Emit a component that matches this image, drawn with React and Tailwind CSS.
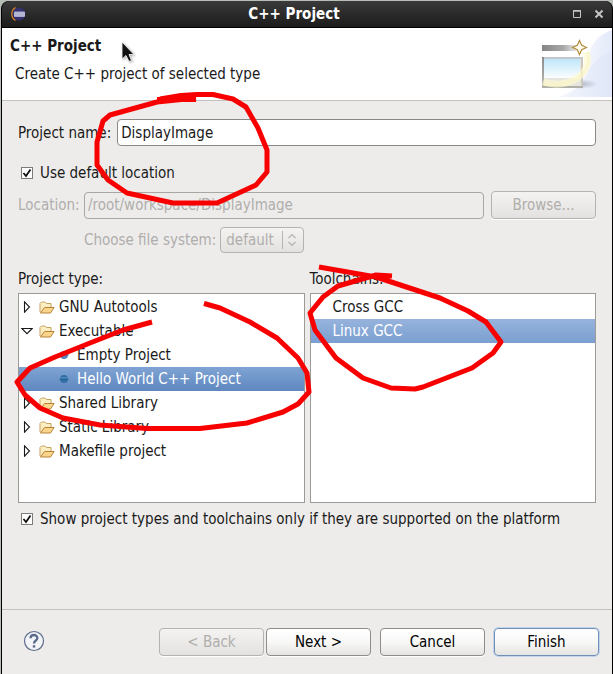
import React, { useState } from "react";

const projectTypes = [
  { name: "GNU Autotools", children: [] },
  { name: "Executable", children: ["Empty Project", "Hello World C++ Project"] },
  { name: "Shared Library", children: [] },
  { name: "Static Library", children: [] },
  { name: "Makefile project", children: [] },
];

const toolchains = ["Cross GCC", "Linux GCC"];

const EclipseIcon = () => (
  <svg width="16" height="16" viewBox="0 0 16 16" aria-hidden="true">
    <circle cx="9" cy="8" r="6.500" fill="#35306e" />
    <path d="M5.500 1.500C0.500 4.500 0.500 11.500 5.500 14.500" fill="none" stroke="#d9822b" strokeWidth="1.300" />
    <rect x="4" y="5.500" width="11" height="5.500" rx="1" fill="#a9a9cc" />
    <path d="M4 7h11M4 9h11" stroke="#c9c9e2" strokeWidth="0.700" />
  </svg>
);

const WizardBanner = () => (
  <svg width="75" height="70" viewBox="0 0 75 70" aria-hidden="true">
    <defs>
      <linearGradient id="sweep" x1="0" y1="0" x2="1" y2="0">
        <stop offset="0.3" stopColor="#ffffff" />
        <stop offset="1" stopColor="#e4eafa" />
      </linearGradient>
      <linearGradient id="bar" x1="0" y1="0" x2="1" y2="0">
        <stop offset="0" stopColor="#858585" />
        <stop offset="0.6" stopColor="#a9a9a9" />
        <stop offset="1" stopColor="#f4f4f4" />
      </linearGradient>
      <linearGradient id="side" x1="0" y1="0" x2="0" y2="1">
        <stop offset="0" stopColor="#8c8c8c" />
        <stop offset="1" stopColor="#b9b9b4" />
      </linearGradient>
      <linearGradient id="pane" x1="0" y1="0" x2="0" y2="1">
        <stop offset="0" stopColor="#bfe6fa" />
        <stop offset="1" stopColor="#fbfdff" />
      </linearGradient>
      <radialGradient id="shadow">
        <stop offset="0" stopColor="#8f93a8" stopOpacity="0.6" />
        <stop offset="1" stopColor="#8f93a8" stopOpacity="0" />
      </radialGradient>
    </defs>
    <path d="M75 2C62 6 53 16 50 32C46 54 30 64 6 69H75z" fill="url(#sweep)" />
    <path d="M75 24C62 27 54 36 50 46C44 60 34 66 20 69H75z" fill="#d5ddf4" opacity="0.3" />
    <ellipse cx="44" cy="56" rx="17" ry="5" fill="url(#shadow)" />
    <rect x="5" y="17" width="41" height="43" fill="#fff" />
    <rect x="5" y="17" width="36" height="6" fill="url(#bar)" />
    <rect x="5" y="29" width="41" height="31" fill="#e6e6df" />
    <rect x="5" y="29" width="41" height="2" fill="#c4c8ca" />
    <rect x="5" y="29" width="2" height="31" fill="url(#side)" />
    <rect x="44" y="31" width="2" height="29" fill="#c9c9c2" />
    <rect x="5" y="58" width="41" height="2" fill="#b0b0a8" />
    <rect x="7" y="31" width="36" height="19" fill="url(#pane)" />
    <path d="M49 24C57 44 34 62 6 54" fill="none" stroke="#fdf9d2" strokeWidth="7" opacity="0.7" />
    <path d="M50 24C57 44 34 61 7 56" fill="none" stroke="#f9f3b8" strokeWidth="3" strokeDasharray="2 1" opacity="0.5" />
    <path d="M42.500 12.500L44.700 17.300L49.500 19.500L44.700 21.700L42.500 26.500L40.300 21.700L35.500 19.500L40.300 17.300Z" fill="#fffdf2" stroke="#b48a3c" strokeWidth="1.200" />
  </svg>
);

const FolderIcon = () => (
  <svg width="16" height="16" viewBox="0 0 16 16" className="shrink-0" aria-hidden="true">
    <path d="M1 13V4.500L2.500 3H6L7.500 4.500H12V8.500" fill="#fdeec2" stroke="#c8a060" />
    <path d="M1.500 14L5.500 8.500H15.200L11.500 14Z" fill="#fbd68a" stroke="#b9823a" strokeLinejoin="round" />
  </svg>
);

const DotIcon = ({ selected }) => (
  <svg width="10" height="10" viewBox="0 0 10 10" className="shrink-0" aria-hidden="true">
    <circle cx="5" cy="5" r="4" fill={selected ? "#2f6fa6" : "#5b83bb"} />
    <path d="M0 4h10" stroke={selected ? "#6b9fcf" : "#86a8d6"} strokeWidth="1" />
    <path d="M0.500 5.200h9" stroke={selected ? "#245f92" : "#4a73ac"} strokeWidth="1" />
  </svg>
);

const Expander = ({ open }) => (
  <svg width="12" height="12" viewBox="0 0 12 12" className="shrink-0" aria-hidden="true">
    <path
      d={open ? "M0.800 3.500H11.200L6 8.700Z" : "M3.500 0.800V11.200L8.500 6Z"}
      fill="#fff"
      stroke="#1a1a1a"
      strokeWidth="1.100"
    />
  </svg>
);

const Checkbox = ({ label, checked, onChange }) => (
  <label className="flex items-center gap-[7px] pl-[3px] leading-5">
    <span className="grid h-3 w-3 shrink-0 place-items-center">
      <input
        type="checkbox"
        checked={checked}
        onChange={onChange}
        className="col-start-1 row-start-1 h-3 w-3 appearance-none border border-[#7d7b78] bg-white"
      />
      {checked && (
        <svg width="12" height="12" viewBox="0 0 12 12" className="pointer-events-none col-start-1 row-start-1">
          <path d="M2.500 6L5 9L9.500 2.500" fill="none" stroke="#111" strokeWidth="1.800" />
        </svg>
      )}
    </span>
    {label}
  </label>
);

const buttonBase = "h-7 w-[105px] rounded-[4px] border shadow-[0_1px_0_#ffffff] ";
const buttonStyles = {
  normal: "border-[#8f8d8a] bg-linear-to-b from-white via-[#f8f8f7] to-[#e6e4e2] text-black",
  disabled: "border-[#b5b3b0] bg-linear-to-b from-[#f4f3f2] to-[#e3e2e0] text-[#b0aeab]",
  primary:
    "border-[#6d8fb8] bg-linear-to-b from-white via-[#f8f8f7] to-[#e6e4e2] text-black outline outline-[#c3d4ea]",
};

const Button = ({ variant = "normal", children }) => (
  <button type="button" disabled={variant === "disabled"} className={buttonBase + buttonStyles[variant]}>
    {children}
  </button>
);

// Red marker strokes drawn over the dialog
const Markers = () => (
  <svg
    width="613"
    height="674"
    viewBox="0 0 613 674"
    className="pointer-events-none absolute top-0 left-0"
    fill="none"
    stroke="#f80000"
    strokeWidth="5"
    strokeLinejoin="round"
    aria-hidden="true"
  >
    <path d="M157 99.500H196" />
    <path d="M196 98L157 102L110 115L103 121L97 142V165L108 180L127 193L173 203H217L256 185L267 172V150L258 128L246 107L233 99L213 94.500H197L181 95.500L160 99" />
    <path d="M152 322L123 330L90 343L55 357L30 368L17 382L25 395L40 408L63 418L100 425L147 428.500H200L247 423L283 412L298 404L309 392L307 373L298 358L277 338L250 322L220 308L204 303.500" />
    <path d="M319 267L376 277L440 298L468 311L486 322L501 342L493 353L472 368L423 387L415 389L391 388L363 378L336 358L315 330L310 313L323 297L338 286L376 275L392 276" />
    <path
      d="M122 42V59L126 55.500L129 61.500L131.500 60.500L129 54.500H134Z"
      fill="#111"
      stroke="#fff"
      strokeWidth="0.800"
      className="drop-shadow-[1px_1px_1px_#00000055]"
    />
  </svg>
);

const App = () => {
  const [name, setName] = useState("DisplayImage");
  const [useDefault, setUseDefault] = useState(true);
  const [supportedOnly, setSupportedOnly] = useState(true);
  const [expanded, setExpanded] = useState("Executable");
  const [projectType, setProjectType] = useState("Hello World C++ Project");
  const [toolchain, setToolchain] = useState("Linux GCC");

  const rowSelected = "bg-linear-to-b from-[#96b3dc] to-[#7a9fd0] text-white";
  const treeSelected = "bg-linear-to-b from-[#7fa3d3] to-[#5f88c0] text-white";

  return (
    <div className="relative flex min-h-screen flex-col overflow-hidden bg-[#b9bdb7] pt-px pl-px font-['DejaVu_Sans_Condensed','DejaVu_Sans',sans-serif] text-[15px] leading-5 text-[#1a1a1a]">
      <div className="flex flex-1 flex-col rounded-t-lg border-x border-black bg-black">
        {/* Title bar */}
        <header className="flex h-[27px] items-center rounded-t-lg border-b border-black bg-linear-to-b from-[#3a3a3a] to-[#1c1c1c] px-2">
          <EclipseIcon />
          <div className="flex-1 text-center font-bold text-white">C++ Project</div>
          <div className="flex items-center gap-3 pl-[10px]">
            <button type="button" aria-label="Maximize">
              <svg width="10" height="10" viewBox="0 0 10 10" fill="none" stroke="#c4c4c4">
                <path d="M1.500 1.500h7v7h-7z" />
                <path d="M1 2h8" strokeWidth="1.500" />
              </svg>
            </button>
            <button type="button" aria-label="Close">
              <svg width="10" height="10" viewBox="0 0 10 10" fill="none" stroke="#c4c4c4" strokeWidth="2">
                <path d="M1.500 1.500l7 7M8.500 1.500l-7 7" />
              </svg>
            </button>
          </div>
        </header>

        {/* Wizard heading */}
        <section className="flex h-[73px] justify-between border-b border-[#c4c2bf] bg-white">
          <div className="pt-2 pl-2">
            <h1 className="font-bold">C++ Project</h1>
            <p className="pt-2 pl-[5px]">Create C++ project of selected type</p>
          </div>
          <WizardBanner />
        </section>

        <main className="flex flex-1 flex-col bg-[#edeceb] px-4 pt-[18px]">
          <div className="flex items-center gap-1.5">
            <label htmlFor="name">Project name:</label>
            <input
              id="name"
              value={name}
              onChange={(e) => setName(e.target.value)}
              className="h-[27px] min-w-0 flex-1 rounded-[4px] border border-[#8a8886] bg-white px-[3px] outline-none"
            />
          </div>

          <div className="pt-[17px]">
            <Checkbox
              label="Use default location"
              checked={useDefault}
              onChange={() => setUseDefault(!useDefault)}
            />
          </div>

          <div className="flex items-center pt-2 text-[#b0aeab]">
            <label htmlFor="location" className="w-[66px]">
              Location:
            </label>
            <input
              id="location"
              disabled
              defaultValue="/root/workspace/DisplayImage"
              className="mr-[7px] h-[27px] min-w-0 flex-1 rounded-[4px] border border-[#a9a7a4] px-[3px]"
            />
            <Button variant="disabled">Browse...</Button>
          </div>

          <div className="flex items-center gap-1 pt-2 pl-[66px] text-[#b0aeab]">
            <label htmlFor="fs">Choose file system:</label>
            <div className="grid items-center">
              <select
                id="fs"
                disabled
                className="col-start-1 row-start-1 h-[26px] w-[84px] appearance-none rounded-[4px] border border-[#b5b3b0] bg-linear-to-b from-[#f4f3f2] to-[#e3e2e0] pl-[5px]"
              >
                <option>default</option>
              </select>
              <svg
                width="22"
                height="20"
                viewBox="0 0 22 20"
                fill="none"
                stroke="#b5b3b0"
                className="pointer-events-none col-start-1 row-start-1 justify-self-end"
              >
                <path d="M0.500 1v18" />
                <path d="M6.500 8L10 4.500L13.500 8M6.500 12L10 15.500L13.500 12" strokeWidth="1.200" />
              </svg>
            </div>
          </div>

          <div className="grid grid-cols-2 gap-x-[5px] pt-4">
            <div id="types">Project type:</div>
            <div id="chains">Toolchains:</div>

            <ul aria-labelledby="types" className="mt-1 h-[210px] border border-[#9c9a97] bg-white pt-px">
              {projectTypes.map((type) => {
                const open = expanded === type.name;
                return (
                  <li key={type.name}>
                    <button
                      type="button"
                      onClick={() => setExpanded(open ? "" : type.name)}
                      className="flex h-6 w-full items-center pl-0.5"
                    >
                      <Expander open={open} />
                      <span className="pr-1 pl-1.5">
                        <FolderIcon />
                      </span>
                      {type.name}
                    </button>
                    {open &&
                      type.children.map((child) => (
                        <button
                          key={child}
                          type="button"
                          onClick={() => setProjectType(child)}
                          className={
                            "flex h-6 w-full items-center gap-2 pl-10 " +
                            (projectType === child ? treeSelected : "")
                          }
                        >
                          <DotIcon selected={projectType === child} />
                          {child}
                        </button>
                      ))}
                  </li>
                );
              })}
            </ul>

            <ul aria-labelledby="chains" className="mt-1 h-[210px] border border-[#9c9a97] bg-white pt-px">
              {toolchains.map((chain) => (
                <li key={chain}>
                  <button
                    type="button"
                    onClick={() => setToolchain(chain)}
                    className={
                      "flex h-6 w-full items-center pl-[22px] " + (toolchain === chain ? rowSelected : "")
                    }
                  >
                    {chain}
                  </button>
                </li>
              ))}
            </ul>
          </div>

          <div className="pt-1.5 pb-4">
            <Checkbox
              label="Show project types and toolchains only if they are supported on the platform"
              checked={supportedOnly}
              onChange={() => setSupportedOnly(!supportedOnly)}
            />
          </div>
        </main>

        <footer className="flex items-start justify-between border-t border-[#c4c2bf] bg-[#edeceb] pt-[18px] pr-[13px] pb-[18px] pl-[21px]">
          <button type="button" aria-label="Help" className="pt-0.5">
            <svg width="22" height="22" viewBox="0 0 22 22" fill="none" stroke="#5d6c8c">
              <circle cx="11" cy="11" r="9.500" fill="#f3f4f7" strokeWidth="1.200" />
              <path d="M7.500 8.200C7.700 4 14.500 4 14.300 8.200C14.200 10.500 11 10.600 11 13.500" strokeWidth="2.400" />
              <path d="M11 15.200v2.400" strokeWidth="2.400" />
            </svg>
          </button>
          <div className="flex gap-[9px]">
            <div className="flex gap-0.5">
              <Button variant="disabled">&lt; Back</Button>
              <Button>Next &gt;</Button>
            </div>
            <Button>Cancel</Button>
            <Button variant="primary">Finish</Button>
          </div>
        </footer>
      </div>
      <Markers />
    </div>
  );
};

export default App;
